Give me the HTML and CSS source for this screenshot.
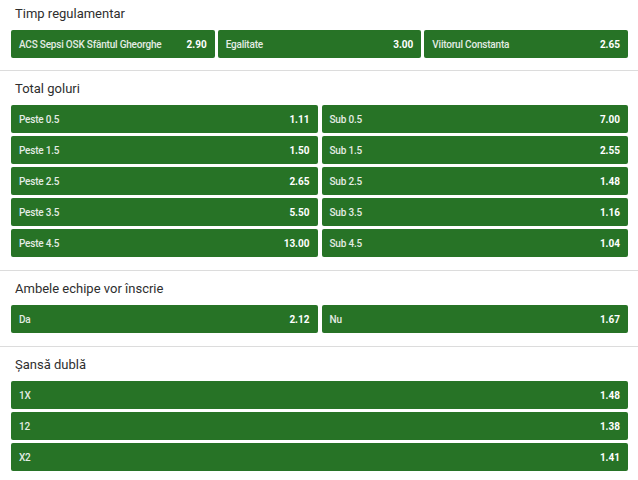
FILE: index.html
```html
<!DOCTYPE html>
<html lang="ro">
<head>
  <meta charset="UTF-8">
  <meta name="viewport" content="width=device-width, initial-scale=1.0">
  <title>Cote</title>
  <link rel="stylesheet" href="styles.css">
</head>
<body>
  <div class="market first">
    <div class="market-title">Timp regulamentar</div>
    <div class="outcomes cols-3">
      <div class="odd"><span class="label">ACS Sepsi OSK Sfântul Gheorghe</span><span class="price">2.90</span></div>
      <div class="odd"><span class="label">Egalitate</span><span class="price">3.00</span></div>
      <div class="odd"><span class="label">Viitorul Constanta</span><span class="price">2.65</span></div>
    </div>
  </div>

  <div class="market">
    <div class="market-title">Total goluri</div>
    <div class="outcomes cols-2">
      <div class="odd"><span class="label">Peste 0.5</span><span class="price">1.11</span></div>
      <div class="odd"><span class="label">Sub 0.5</span><span class="price">7.00</span></div>
      <div class="odd"><span class="label">Peste 1.5</span><span class="price">1.50</span></div>
      <div class="odd"><span class="label">Sub 1.5</span><span class="price">2.55</span></div>
      <div class="odd"><span class="label">Peste 2.5</span><span class="price">2.65</span></div>
      <div class="odd"><span class="label">Sub 2.5</span><span class="price">1.48</span></div>
      <div class="odd"><span class="label">Peste 3.5</span><span class="price">5.50</span></div>
      <div class="odd"><span class="label">Sub 3.5</span><span class="price">1.16</span></div>
      <div class="odd"><span class="label">Peste 4.5</span><span class="price">13.00</span></div>
      <div class="odd"><span class="label">Sub 4.5</span><span class="price">1.04</span></div>
    </div>
  </div>

  <div class="market">
    <div class="market-title">Ambele echipe vor înscrie</div>
    <div class="outcomes cols-2">
      <div class="odd"><span class="label">Da</span><span class="price">2.12</span></div>
      <div class="odd"><span class="label">Nu</span><span class="price">1.67</span></div>
    </div>
  </div>

  <div class="market last">
    <div class="market-title">Şansă dublă</div>
    <div class="outcomes cols-1">
      <div class="odd"><span class="label">1X</span><span class="price">1.48</span></div>
      <div class="odd"><span class="label">12</span><span class="price">1.38</span></div>
      <div class="odd"><span class="label">X2</span><span class="price">1.41</span></div>
    </div>
  </div>
</body>
</html>
```

FILE: styles.css
```css
body {
  margin: 0;
  font-family: Roboto, "Liberation Sans", Arial, sans-serif;
  background-color: #fff;
  color: #333;
}

.market {
  padding: 10px 10px 13px 11px;
  border-bottom: 1px solid #dcdcdc;
}

.market.first {
  padding-top: 6px;
  padding-bottom: 12px;
}

.market.last {
  border-bottom: none;
}

.market-title {
  padding-left: 4px;
  font-size: 13px;
  line-height: 16px;
  margin-bottom: 8px;
  color: #2e2e2e;
}

.outcomes {
  display: grid;
  gap: 3px 4px;
}

.cols-3 { grid-template-columns: repeat(3, 1fr); gap: 3px; }
.cols-2 { grid-template-columns: repeat(2, 1fr); }
.cols-1 { grid-template-columns: 1fr; }

.odd {
  display: flex;
  align-items: center;
  justify-content: space-between;
  height: 28px;
  padding: 0 8px;
  background-color: #277326;
  border-radius: 2px;
  font-size: 10px;
}

.label {
  color: #e4ece4;
  font-weight: 500;
  letter-spacing: -0.2px;
}

.price {
  color: #fff;
  font-weight: bold;
}
```
